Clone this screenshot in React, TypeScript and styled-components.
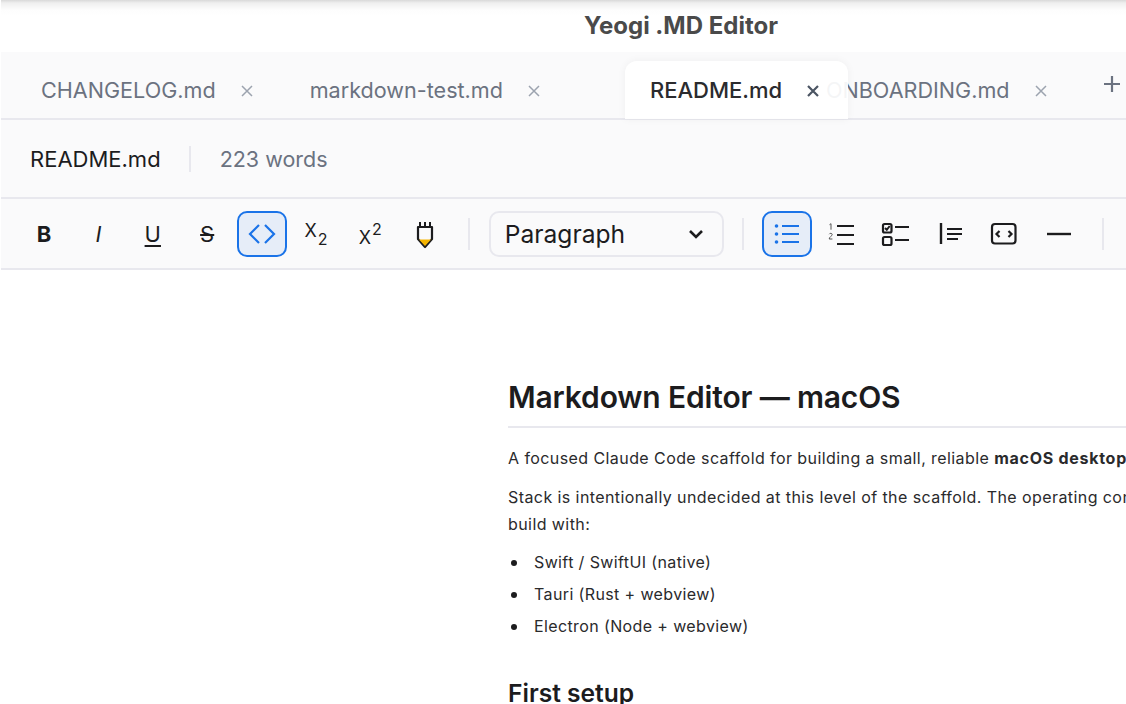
import styled, { createGlobalStyle } from "styled-components"
import { ReactNode } from "react"

const GlobalStyle = createGlobalStyle`
  html, body {
    margin: 0;
    height: 100%;
    overflow: hidden;
    background: #ffffff;
  }
  * {
    box-sizing: border-box;
  }
  body {
    font-family: Inter, "Liberation Sans", sans-serif;
  }
`

const Window = styled.div`
  width: 1126px;
  height: 704px;
  overflow: hidden;
  padding-left: 1px;
  background: #ffffff;
`

const TitleBar = styled.div`
  height: 52px;
  padding: 0 0 2px 235px;
  display: flex;
  align-items: center;
  justify-content: center;
  background: linear-gradient(#d9d9d9 0, #efefef 3px, #fdfdfd 10px, #ffffff 16px);
  color: #4a4a4a;
  font-size: 24px;
  font-weight: 700;
`

const TabBar = styled.div`
  height: 68px;
  padding-left: 16px;
  display: flex;
  align-items: flex-end;
  background: #fafafb;
  border-bottom: 2px solid #e8e8ee;
`

const Tab = styled.div<{ $overlap?: number }>`
  height: 58px;
  margin-left: ${p => p.$overlap ?? 0}px;
  padding: 2px 33px 0 24px;
  display: flex;
  flex: none;
  align-items: center;
  gap: 25px;
  color: #6b7280;
  font-size: 21.6px;
`

const ActiveTab = styled(Tab)`
  position: relative;
  z-index: 1;
  width: 223px;
  margin-bottom: -1px;
  padding: 0 0 0 25px;
  border-radius: 12px 12px 0 0;
  background: rgba(255, 255, 255, 0.93);
  box-shadow: 0 0 8px rgba(0, 0, 0, 0.05);
  color: #2b2b2e;
  font-size: 22px;
  font-weight: 500;
`

const CloseIcon = styled.svg<{ $active?: boolean }>`
  width: 12px;
  height: 12px;
  margin-top: 2px;
  flex: none;
  stroke: ${p => (p.$active ? "#4b5563" : "#9ca3af")};
  stroke-width: ${p => (p.$active ? 2.2 : 1.5)};
`

const AddTab = styled.svg`
  width: 18px;
  height: 18px;
  flex: none;
  margin: 0 0 25px 23px;
  stroke: #6b7280;
  stroke-width: 2.2;
`

const InfoBar = styled.div`
  height: 79px;
  padding-left: 29px;
  display: flex;
  align-items: center;
  background: #fafafb;
  border-bottom: 2px solid #e8e8ee;
`

const FileName = styled.span`
  color: #1c1c1e;
  font-size: 22px;
`

const InfoDivider = styled.span`
  width: 2px;
  height: 26px;
  margin: 0 29px 0 28px;
  background: #e8e8ee;
`

const WordCount = styled.span`
  color: #6b7280;
  font-size: 21.5px;
`

const Toolbar = styled.div`
  height: 71px;
  padding-left: 18px;
  display: flex;
  align-items: center;
  background: #fafafb;
  border-bottom: 2px solid #e8e8ee;
`

const ToolGroup = styled.div<{ $gap: number }>`
  display: flex;
  gap: ${p => p.$gap}px;
`

const ToolButton = styled.button<{ $active?: boolean }>`
  width: 50px;
  height: 46px;
  padding: 0;
  display: flex;
  align-items: center;
  justify-content: center;
  border: 2px solid ${p => (p.$active ? "#1a73e8" : "transparent")};
  border-radius: 10px;
  background: ${p => (p.$active ? "#e6edf8" : "transparent")};
  color: ${p => (p.$active ? "#1a73e8" : "#1c1c1e")};
  font-family: inherit;
  font-size: 22px;
`

const BoldGlyph = styled.span`
  font-weight: 700;
`

const ItalicGlyph = styled.span`
  font-style: italic;
`

const UnderlineGlyph = styled.span`
  text-decoration: underline;
  text-underline-offset: 3px;
  text-decoration-thickness: 2px;
`

const StrikeGlyph = styled.span`
  text-decoration: line-through;
  text-decoration-thickness: 2px;
`

const ScriptGlyph = styled.span<{ $shift: number }>`
  font-size: 18px;
  line-height: 1;
  transform: translateY(${p => p.$shift}px);
`

const SubMark = styled.span`
  margin-left: 1px;
  font-size: 16px;
  line-height: 0;
  vertical-align: -8px;
`

const SupMark = styled.span`
  margin-left: 1px;
  font-size: 16px;
  line-height: 0;
  vertical-align: 9px;
`

const Divider = styled.span<{ $left: number; $right: number }>`
  width: 2px;
  height: 32px;
  margin: 0 ${p => p.$right}px 0 ${p => p.$left}px;
  background: #e8e8ee;
`

const BlockSelect = styled.div`
  width: 235px;
  height: 46px;
  padding: 0 14px;
  display: flex;
  align-items: center;
  justify-content: space-between;
  border: 2px solid #e8e8ee;
  border-radius: 10px;
  color: #1c1c1e;
  font-size: 24.6px;
`

const Icon = styled.svg`
  width: 30px;
  height: 30px;
  flex: none;
  fill: none;
  stroke: currentColor;
  stroke-width: 2;
`

const ChevronIcon = styled.svg`
  width: 20px;
  height: 20px;
  margin-right: 2px;
  fill: none;
  stroke: #1c1c1e;
  stroke-width: 2.6;
`

const Editor = styled.main`
  width: 900px;
  margin-left: 507px;
  padding-top: 106px;
  color: #2a2a2c;
`

const Heading = styled.h1`
  margin: 0 0 17px;
  padding-bottom: 8px;
  border-bottom: 2px solid #e8e8ee;
  color: #1c1c1e;
  font-size: 30px;
  font-weight: 600;
  line-height: 42px;
  letter-spacing: -0.15px;
`

const Paragraph = styled.p`
  margin: 0 0 12px;
  font-size: 16px;
  line-height: 27px;
  letter-spacing: 0.42px;

  strong {
    letter-spacing: 0.72px;
  }
`

const BulletList = styled.ul`
  margin: -1px 0 35px;
  padding-left: 3px;
  list-style: none;
  font-size: 16px;
  line-height: 27px;
  letter-spacing: 0.38px;
`

const BulletItem = styled.li`
  margin-bottom: 5px;
  display: flex;
  align-items: center;
  gap: 17px;

  &::before {
    content: "";
    width: 6px;
    height: 6px;
    border-radius: 50%;
    background: #1c1c1e;
  }
`

const SubHeading = styled.h2`
  margin: 0;
  color: #1c1c1e;
  font-size: 24.6px;
  font-weight: 600;
  line-height: 36px;
`

const Close = ({ active }: { active?: boolean }) => (
  <CloseIcon $active={active} viewBox="0 0 12 12">
    <path d="M1 1l10 10M11 1L1 11" />
  </CloseIcon>
)

const tool = (key: string, content: ReactNode, active?: boolean) => (
  <ToolButton key={key} $active={active}>{content}</ToolButton>
)

const inlineTools = [
  tool("bold", <BoldGlyph>B</BoldGlyph>),
  tool("italic", <ItalicGlyph>I</ItalicGlyph>),
  tool("underline", <UnderlineGlyph>U</UnderlineGlyph>),
  tool("strike", <StrikeGlyph>S</StrikeGlyph>),
  tool("code", (
    <Icon viewBox="0 0 30 30">
      <path d="M12 6l-9 9 9 9M18 6l9 9-9 9" strokeWidth="2.2" />
    </Icon>
  ), true),
  tool("sub", <ScriptGlyph $shift={-3}>X<SubMark>2</SubMark></ScriptGlyph>),
  tool("sup", <ScriptGlyph $shift={4}>X<SupMark>2</SupMark></ScriptGlyph>),
  tool("highlight", (
    <Icon viewBox="0 0 30 30">
      <path d="M8 8h14v12l-7 8-7-8z" strokeWidth="2.200" strokeLinejoin="round" />
      <path d="M10 3v5M15 3v5M20 3v5" strokeWidth="2" />
      <path d="M9 20.500h12L15 27z" fill="#f5b400" stroke="none" />
    </Icon>
  )),
]

const blockTools = [
  tool("bullets", (
    <Icon viewBox="0 0 30 30">
      <path d="M10 7h17M10 15h17M10 23h17" />
      <circle cx="4.500" cy="7" r="1.800" fill="currentColor" stroke="none" />
      <circle cx="4.500" cy="15" r="1.800" fill="currentColor" stroke="none" />
      <circle cx="4.500" cy="23" r="1.800" fill="currentColor" stroke="none" />
    </Icon>
  ), true),
  tool("ordered", (
    <Icon viewBox="0 0 30 30">
      <path d="M11 7h17M11 16h17M11 25h17" strokeWidth="2.200" />
      <path d="M3.500 5.700l1.500-1v6" strokeWidth="1" stroke="#555" />
      <path d="M3.200 15.200c.4-1.200 3-1.200 3 .4 0 1.400-3 2.200-3 4.400h3.200" strokeWidth="1" stroke="#555" />
    </Icon>
  )),
  tool("tasks", (
    <Icon viewBox="0 0 30 30">
      <rect x="3" y="5" width="8.500" height="8.500" rx="1.500" strokeWidth="2.200" />
      <path d="M5 9l1.800 1.800L9.700 7" />
      <rect x="3" y="18" width="8.500" height="8" rx="1.500" strokeWidth="2.200" />
      <path d="M15 8h14M15 21h14" />
    </Icon>
  )),
  tool("quote", (
    <Icon viewBox="0 0 30 30">
      <path d="M7 4v21" strokeWidth="2.400" />
      <path d="M13 10h15M13 15h15M13 20h11" strokeWidth="1.800" />
    </Icon>
  )),
  tool("codeblock", (
    <Icon viewBox="0 0 30 30">
      <rect x="4" y="5" width="23.500" height="19.500" rx="3" strokeWidth="2.200" />
      <path d="M11.500 12l-3 3 3 3M20.500 12l3 3-3 3" strokeWidth="2.200" />
    </Icon>
  )),
  tool("rule", (
    <Icon viewBox="0 0 30 30">
      <path d="M5 15h24" strokeWidth="2.400" />
    </Icon>
  )),
]

export default function App() {
  return (
    <Window>
      <GlobalStyle />
      <TitleBar>Yeogi .MD Editor</TitleBar>
      <TabBar>
        <Tab>CHANGELOG.md<Close /></Tab>
        <Tab>markdown-test.md<Close /></Tab>
        <ActiveTab $overlap={52}>README.md<Close active /></ActiveTab>
        <Tab $overlap={-46}>ONBOARDING.md<Close /></Tab>
        <AddTab viewBox="0 0 18 18"><path d="M9 1v16M1 9h16" /></AddTab>
      </TabBar>
      <InfoBar>
        <FileName>README.md</FileName>
        <InfoDivider />
        <WordCount>223 words</WordCount>
      </InfoBar>
      <Toolbar>
        <ToolGroup $gap={4.4}>{inlineTools}</ToolGroup>
        <Divider $left={18} $right={19} />
        <BlockSelect>
          Paragraph
          <ChevronIcon viewBox="0 0 20 20"><path d="M4 7l6 6 6-6" /></ChevronIcon>
        </BlockSelect>
        <Divider $left={18} $right={18} />
        <ToolGroup $gap={4}>{blockTools}</ToolGroup>
        <Divider $left={20} $right={19} />
      </Toolbar>
      <Editor>
        <Heading>Markdown Editor — macOS</Heading>
        <Paragraph>
          A focused Claude Code scaffold for building a small, reliable <strong>macOS desktop</strong> markdown editor.
        </Paragraph>
        <Paragraph>
          Stack is intentionally undecided at this level of the scaffold. The operating context decides what to<br />
          build with:
        </Paragraph>
        <BulletList>
          <BulletItem>Swift / SwiftUI (native)</BulletItem>
          <BulletItem>Tauri (Rust + webview)</BulletItem>
          <BulletItem>Electron (Node + webview)</BulletItem>
        </BulletList>
        <SubHeading>First setup</SubHeading>
      </Editor>
    </Window>
  )
}
